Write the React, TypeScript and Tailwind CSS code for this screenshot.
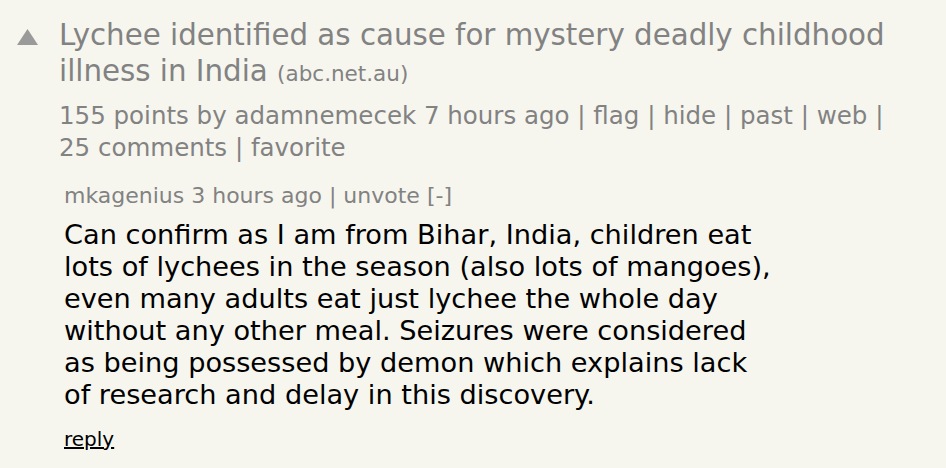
import React from "react";

const font = { fontFamily: '"DejaVu Sans", Verdana, sans-serif' };

const App = () => {
  return (
    <div
      className="w-[946px] h-[468px] bg-[#f6f6ef] overflow-hidden"
      style={font}
    >
      <section className="flex pt-[17px]">
        <div className="w-[59px] shrink-0 flex justify-start pl-[17px] pt-[12px]">
          <svg width="21" height="16" viewBox="0 0 21 16">
            <polygon points="10.5,0 21,16 0,16" fill="#9a9a9a" />
          </svg>
        </div>
        <div>
          <div className="text-[29.3px] leading-[36px] text-[#828282] whitespace-nowrap">
            <a href="#">
              Lychee identified as cause for mystery deadly childhood
              <br />
              illness in India
            </a>{" "}
            <span className="text-[21.5px]">(abc.net.au)</span>
          </div>
          <div className="mt-[8px] text-[24.5px] leading-[32px] text-[#828282] whitespace-nowrap">
            155 points by adamnemecek 7 hours ago | flag | hide | past | web |
            <br />
            25 comments | favorite
          </div>
        </div>
      </section>

      <section className="pl-[64px] mt-[18px]">
        <div className="text-[22px] leading-[28px] text-[#828282]">
          mkagenius 3 hours ago | unvote [-]
        </div>
        <div className="mt-[9px] text-[27.2px] leading-[32px] text-black whitespace-nowrap">
          Can confirm as I am from Bihar, India, children eat
          <br />
          lots of lychees in the season (also lots of mangoes),
          <br />
          even many adults eat just lychee the whole day
          <br />
          without any other meal. Seizures were considered
          <br />
          as being possessed by demon which explains lack
          <br />
          of research and delay in this discovery.
        </div>
        <div className="mt-[16px] text-[20px] leading-[24px]">
          <a href="#" className="underline text-black">
            reply
          </a>
        </div>
      </section>
    </div>
  );
};

export default App;
